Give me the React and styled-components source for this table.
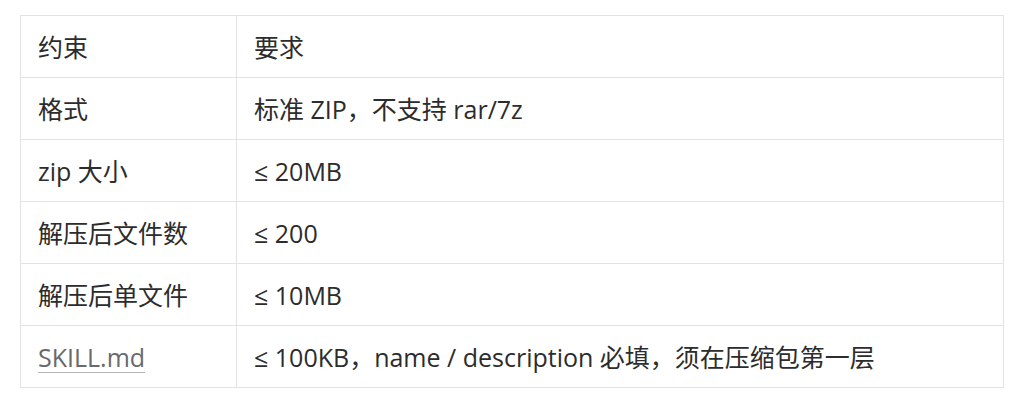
import React from "react";
import styled, { createGlobalStyle } from "styled-components";

const Global = createGlobalStyle`
  html, body { margin: 0; padding: 0; background: #ffffff; }
  body { font-family: "Open Sans", "Noto Sans CJK SC", sans-serif; }
`;

const Page = styled.div`
  padding: 15px 20px 14px 20px;
  background: #ffffff;
`;

const Table = styled.table`
  width: 984px;
  border-collapse: collapse;
  font-size: 25px;
  color: #2c2c2c;
`;

const Row = styled.tr`
  height: 62px;
`;

const Cell = styled.td`
  border: 1px solid #e3e3e3;
  padding: 0 16px 0 17px;
  vertical-align: middle;
  white-space: nowrap;
  width: ${(p) => (p.$first ? "182px" : "auto")};
  line-height: 1.2;
`;

const FileLink = styled.span`
  color: #6a6a6a;
  text-decoration: underline;
  text-decoration-color: #b5b5b5;
  text-underline-offset: 5px;
  text-decoration-thickness: 1px;
`;

const rows = [
  ["约束", "要求"],
  ["格式", "标准 ZIP，不支持 rar/7z"],
  ["zip 大小", "≤ 20MB"],
  ["解压后文件数", "≤ 200"],
  ["解压后单文件", "≤ 10MB"],
  [<FileLink key="s">SKILL.md</FileLink>, "≤ 100KB，name / description 必填，须在压缩包第一层"],
];

export default function App() {
  return (
    <Page>
      <Global />
      <Table>
        <tbody>
          {rows.map((r, i) => (
            <Row key={i}>
              <Cell $first>{r[0]}</Cell>
              <Cell>{r[1]}</Cell>
            </Row>
          ))}
        </tbody>
      </Table>
    </Page>
  );
}
